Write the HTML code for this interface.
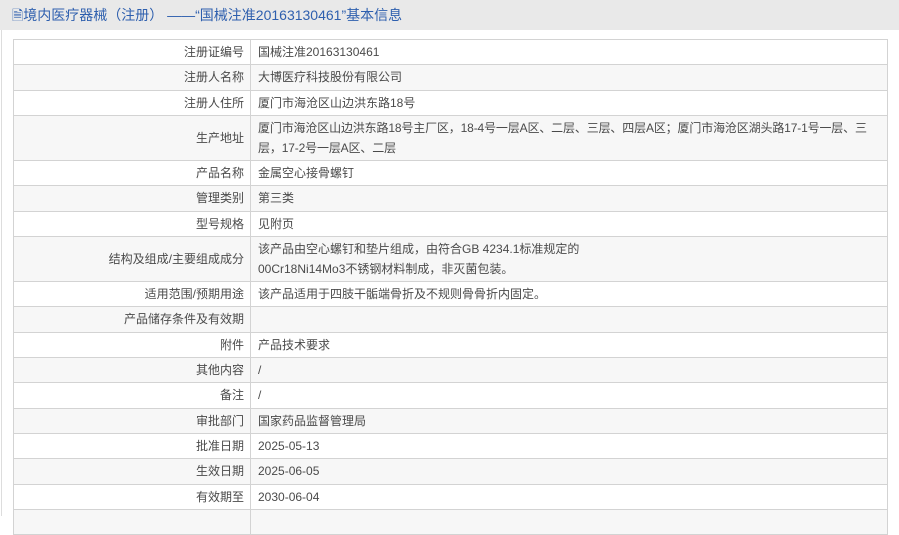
<!DOCTYPE html>
<html><head><meta charset="utf-8"><style>
body{margin:0;width:899px;height:516px;overflow:hidden;background:#fff;font-family:"Liberation Sans","Noto Sans CJK SC",sans-serif;font-size:12px;color:#4a4a4a}
.hd{height:30px;background:#e9e9e9;color:#2e5fae;font-size:14px;line-height:30px;padding-left:12px}
.wrap{position:absolute;left:1px;top:30px;width:897px;height:486px;border-left:1px solid #ddd}
table{position:absolute;left:11px;top:9px;width:875px;border-collapse:collapse}
td{border:1px solid #d3d3d3;height:24.33px;padding:0 6px 0 7px;line-height:20px}
td.l{width:223px;text-align:right}
tr:nth-child(even){background:#f7f7f7}
td.t{height:44px}
</style></head><body>
<div class="hd">🗎境内医疗器械（注册） ——“国械注准20163130461”基本信息</div>
<div class="wrap"><table>
<tr><td class="l">注册证编号</td><td>国械注准20163130461</td></tr>
<tr><td class="l">注册人名称</td><td>大博医疗科技股份有限公司</td></tr>
<tr><td class="l">注册人住所</td><td>厦门市海沧区山边洪东路18号</td></tr>
<tr><td class="l t">生产地址</td><td class="t" style="letter-spacing:-0.15px">厦门市海沧区山边洪东路18号主厂区，18-4号一层A区、二层、三层、四层A区；厦门市海沧区湖头路17-1号一层、三层，17-2号一层A区、二层</td></tr>
<tr><td class="l">产品名称</td><td>金属空心接骨螺钉</td></tr>
<tr><td class="l">管理类别</td><td>第三类</td></tr>
<tr><td class="l">型号规格</td><td>见附页</td></tr>
<tr><td class="l t">结构及组成/主要组成成分</td><td class="t">该产品由空心螺钉和垫片组成，由符合GB 4234.1标准规定的<br>00Cr18Ni14Mo3不锈钢材料制成，非灭菌包装。</td></tr>
<tr><td class="l">适用范围/预期用途</td><td>该产品适用于四肢干骺端骨折及不规则骨骨折内固定。</td></tr>
<tr><td class="l">产品储存条件及有效期</td><td></td></tr>
<tr><td class="l">附件</td><td>产品技术要求</td></tr>
<tr><td class="l">其他内容</td><td>/</td></tr>
<tr><td class="l">备注</td><td>/</td></tr>
<tr><td class="l">审批部门</td><td>国家药品监督管理局</td></tr>
<tr><td class="l">批准日期</td><td>2025-05-13</td></tr>
<tr><td class="l">生效日期</td><td>2025-06-05</td></tr>
<tr><td class="l">有效期至</td><td>2030-06-04</td></tr>
<tr><td class="l">&nbsp;</td><td></td></tr>
</table></div>
</body></html>
